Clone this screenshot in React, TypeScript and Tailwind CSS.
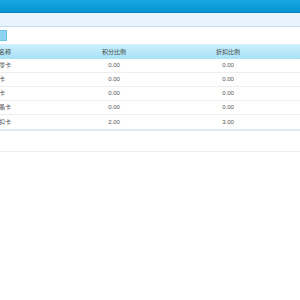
import React from 'react';

// 卡类折扣列表
const rows = [
  { name: '会员零卡', point: '0.00', discount: '0.00' },
  { name: '白银卡', point: '0.00', discount: '0.00' },
  { name: '黄金卡', point: '0.00', discount: '0.00' },
  { name: '紫水晶卡', point: '0.00', discount: '0.00' },
  { name: '储值扣卡', point: '2.00', discount: '3.00' },
];

const font = { fontFamily: '"Liberation Sans", "Noto Sans CJK SC", sans-serif' };

const App: React.FC = () => {
  return (
    <div className="w-[300px] h-[300px] overflow-hidden bg-white" style={font}>
      {/* 顶部标题栏 */}
      <div className="h-[13px] bg-gradient-to-b from-[#16a6e0] to-[#0894d2] border-b border-[#0a7fb8]" />
      {/* 工具栏 */}
      <div className="h-[14px] bg-[#e8f4fc] border-b border-[#c8dbe8]" />
      {/* 按钮区 */}
      <div className="h-[17px] flex items-center">
        <div className="w-[7px] h-[11px] bg-[#8ed4f0] border border-l-0 border-[#6cc3e8] rounded-r-[1px]" />
      </div>

      {/* 表格 */}
      <div className="border-b-2 border-[#e2e9ed]">
        <div className="h-[15px] flex items-center text-[6px] text-[#444] bg-gradient-to-b from-[#c8eefb] to-[#a8e2f6] border-t border-[#d5f0fa]">
          <div className="w-[57px] ml-[-13px]">会员名称</div>
          <div className="w-[114px] text-center ml-[13px]">积分比例</div>
          <div className="w-[114px] text-center">折扣比例</div>
        </div>
        {rows.map((r) => (
          <div key={r.name} className="h-[14px] flex items-center text-[6px] text-[#555] border-b border-[#eeeeee] last:border-b-0">
            <div className="w-[57px] ml-[-13px]">{r.name}</div>
            <div className="w-[114px] text-center ml-[13px]">{r.point}</div>
            <div className="w-[114px] text-center">{r.discount}</div>
          </div>
        ))}
      </div>

      {/* 分页区 */}
      <div className="h-[21px] border-b border-[#eeeeee]" />
    </div>
  );
};

export default App;
